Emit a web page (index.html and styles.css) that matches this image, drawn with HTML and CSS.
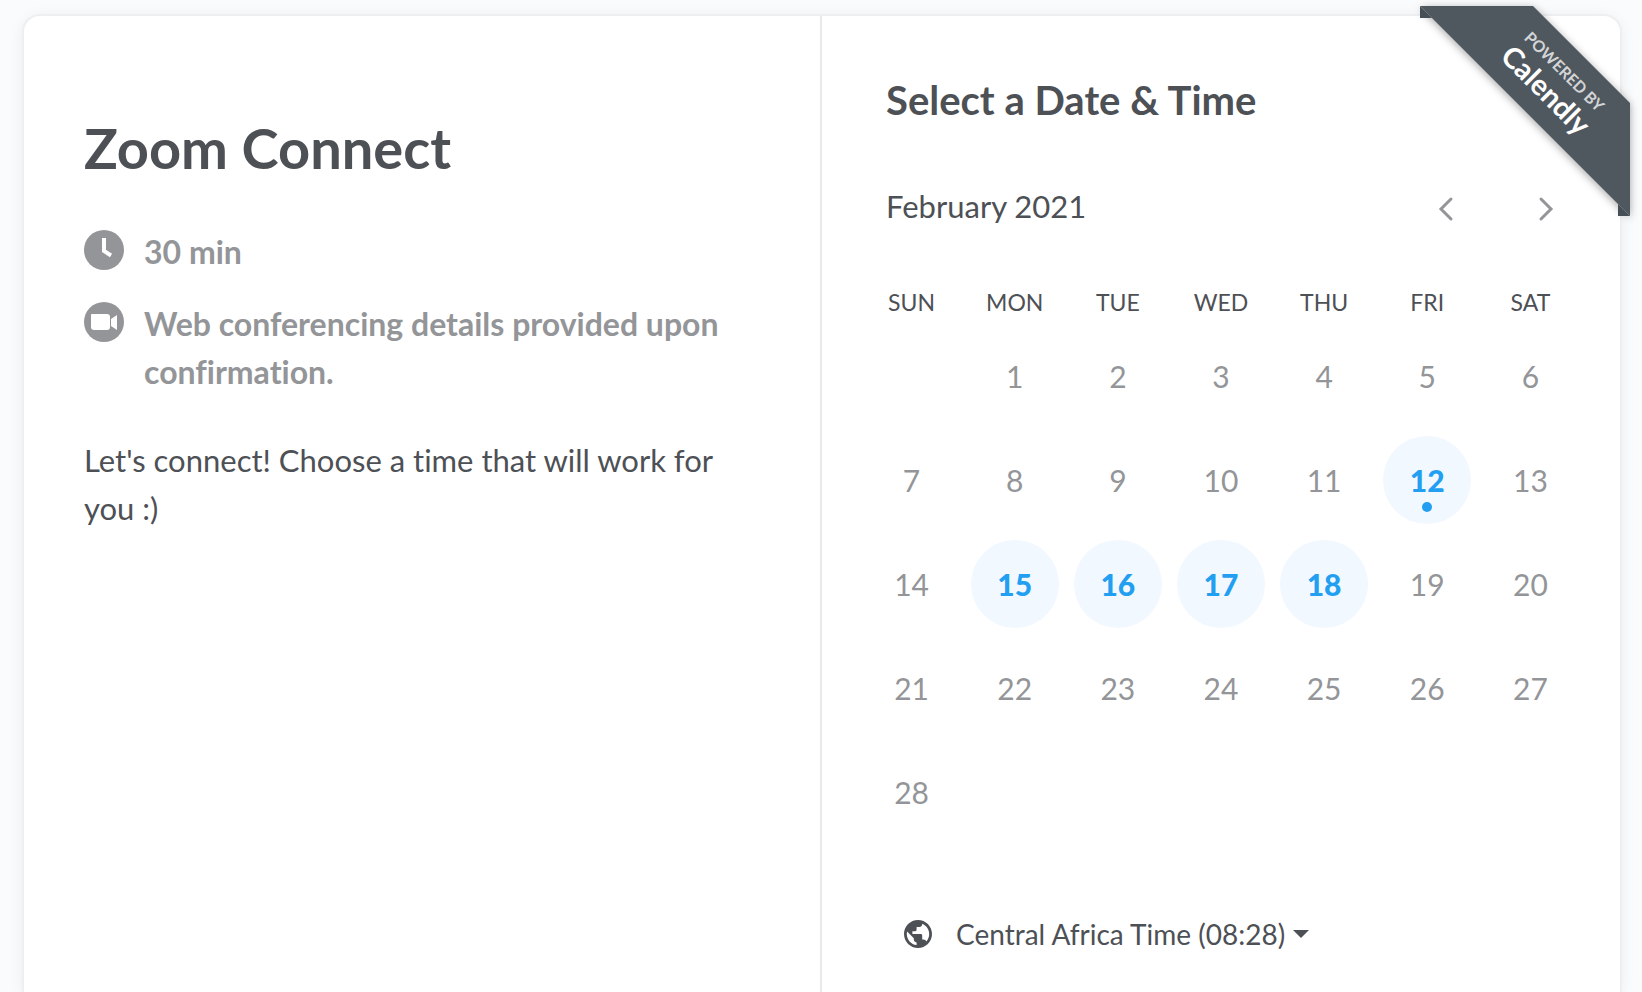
FILE: index.html
```html
<!DOCTYPE html>
<html lang="en">
<head>
<meta charset="utf-8">
<meta name="viewport" content="width=device-width, initial-scale=1">
<title>Zoom Connect - Calendly</title>
<link rel="stylesheet" href="styles.css">
</head>
<body>
<main class="card">
  <section class="details">
    <h1 class="event-title">Zoom Connect</h1>
    <ul class="facts">
      <li class="fact">
        <svg class="fact-icon" viewBox="0 0 40 40" aria-hidden="true">
          <circle cx="20" cy="20" r="20" fill="#939598"/>
          <path d="M20 8v13l7 4.500" fill="none" stroke="#fff" stroke-width="4"/>
        </svg>
        <span class="fact-text">30 min</span>
      </li>
      <li class="fact">
        <svg class="fact-icon" viewBox="0 0 40 40" aria-hidden="true">
          <circle cx="20" cy="20" r="20" fill="#939598"/>
          <path d="M8 12h15q3 0 3 3v10q0 3-3 3H10q-3 0-3-3V13q0-1 1-1z" fill="#fff"/>
          <path d="M27 17l6-4v15l-6-4z" fill="#fff"/>
        </svg>
        <span class="fact-text">Web conferencing details provided upon confirmation.</span>
      </li>
    </ul>
    <p class="description">Let's connect! Choose a time that will work for you :)</p>
  </section>

  <section class="booking">
    <h2 class="booking-title">Select a Date &amp; Time</h2>
    <div class="month-bar">
      <span class="month">February 2021</span>
      <div class="month-nav">
        <button class="nav-button" type="button" aria-label="Previous month">
          <svg class="chevron" viewBox="0 0 16 26" aria-hidden="true"><path d="M13 3L3 13l10 10" /></svg>
        </button>
        <button class="nav-button" type="button" aria-label="Next month">
          <svg class="chevron" viewBox="0 0 16 26" aria-hidden="true"><path d="M3 3l10 10L3 23" /></svg>
        </button>
      </div>
    </div>
    <table class="calendar">
      <thead>
        <tr><th>SUN</th><th>MON</th><th>TUE</th><th>WED</th><th>THU</th><th>FRI</th><th>SAT</th></tr>
      </thead>
      <tbody>
        <tr><td></td><td>1</td><td>2</td><td>3</td><td>4</td><td>5</td><td>6</td></tr>
        <tr><td>7</td><td>8</td><td>9</td><td>10</td><td>11</td><td><button class="day today" type="button">12</button></td><td>13</td></tr>
        <tr><td>14</td><td><button class="day" type="button">15</button></td><td><button class="day" type="button">16</button></td><td><button class="day" type="button">17</button></td><td><button class="day" type="button">18</button></td><td>19</td><td>20</td></tr>
        <tr><td>21</td><td>22</td><td>23</td><td>24</td><td>25</td><td>26</td><td>27</td></tr>
        <tr><td>28</td><td></td><td></td><td></td><td></td><td></td><td></td></tr>
      </tbody>
    </table>
    <div class="timezone">
      <svg class="globe" viewBox="2 2 20 20" aria-hidden="true"><path fill="#4d5055" d="M12 2C6.480 2 2 6.480 2 12s4.480 10 10 10 10-4.480 10-10S17.520 2 12 2zm-1 17.930c-3.950-.490-7-3.850-7-7.930 0-.620.080-1.210.210-1.790L9 15v1c0 1.100.900 2 2 2v1.930zm6.900-2.540c-.260-.810-1-1.390-1.900-1.390h-1v-3c0-.550-.450-1-1-1H8v-2h2c.550 0 1-.450 1-1V7h2c1.100 0 2-.900 2-2v-.410c2.930 1.190 5 4.060 5 7.410 0 2.080-.800 3.970-2.100 5.390z"/></svg>
      <select class="timezone-select" aria-label="Time zone">
        <option>Central Africa Time (08:28)</option>
      </select>
      <svg class="caret" viewBox="0 0 16 8" aria-hidden="true"><path d="M0 0h16L8 8z" fill="#4d5055"/></svg>
    </div>
  </section>

  <a class="ribbon" href="#" aria-label="Powered by Calendly">
    <svg class="ribbon-art" viewBox="0 0 210 210">
      <path class="ribbon-band" d="M0 0h113l97 97v113z"/>
      <path class="ribbon-fold" d="M0 0v12h12zM198 198v12h12z"/>
      <g transform="translate(134 76) rotate(45)">
        <text class="ribbon-small" x="0" y="-9">POWERED BY</text>
        <text class="ribbon-brand" x="0" y="22">Calendly</text>
      </g>
    </svg>
  </a>
</main>
</body>
</html>
```
FILE: styles.css
```css
* {
  box-sizing: border-box;
}

body {
  margin: 0;
  padding: 16px 22px 0 24px;
  background: #fafbfd;
  color: #4d5055;
  font-family: Lato, "Open Sans", sans-serif;
  font-size: 31px;
  font-variant-ligatures: none;
  line-height: 48px;
}

.card {
  position: relative;
  display: grid;
  grid-template-columns: 1fr 1fr;
  min-height: calc(100vh - 16px);
  background: #fff;
  border-radius: 16px 16px 0 0;
  box-shadow: 0 0 0 2px #eeeff1, 0 2px 16px rgba(0, 0, 0, 0.08);
}

.details {
  padding: 98px 60px 0;
  border-right: 2px solid #e8e9eb;
}

.event-title {
  margin: 0;
  font-size: 56px;
  line-height: 68px;
}

.facts {
  display: flex;
  flex-direction: column;
  gap: 24px;
  margin: 46px 0 0;
  padding: 0;
  list-style: none;
  color: #939598;
  font-size: 32px;
  font-weight: 700;
}

.fact {
  display: flex;
  gap: 20px;
}

.fact-icon {
  flex: none;
  width: 40px;
  height: 40px;
  margin-top: 2px;
}

.description {
  margin: 40px 0 0;
}

.booking {
  padding: 58px 38px 0;
}

.booking-title {
  margin: 0 26px;
  font-size: 40px;
  line-height: 52px;
}

.month-bar {
  display: flex;
  justify-content: space-between;
  align-items: center;
  margin: 56px 0 0 26px;
}

.month-nav {
  display: flex;
  gap: 28px;
}

.nav-button {
  display: flex;
  align-items: center;
  justify-content: center;
  width: 72px;
  height: 48px;
  padding: 6px 0 0;
  border: 0;
  background: none;
}

.chevron {
  width: 16px;
  height: 26px;
  fill: none;
  stroke: #939598;
  stroke-width: 3;
  stroke-linecap: round;
}

.calendar {
  width: 100%;
  margin-top: 50px;
  border-collapse: collapse;
  table-layout: fixed;
}

.calendar th {
  height: 44px;
  padding: 0;
  font-size: 23px;
  font-weight: 400;
  line-height: 44px;
}

.calendar td {
  height: 104px;
  padding: 0;
  color: #939598;
  font-size: 30px;
  text-align: center;
}

.day {
  position: relative;
  display: block;
  width: 88px;
  height: 88px;
  margin: 0 auto;
  padding: 0;
  border: 0;
  border-radius: 50%;
  background: #f2f8ff;
  color: #239ff1;
  font: inherit;
  font-weight: 900;
}

.today::after {
  content: "";
  position: absolute;
  bottom: 12px;
  left: 50%;
  width: 10px;
  height: 10px;
  margin-left: -5px;
  border-radius: 50%;
  background: #239ff1;
}

.timezone {
  display: flex;
  align-items: center;
  margin: 66px 44px 0;
}

.globe {
  width: 28px;
  height: 28px;
  margin-right: 24px;
}

.timezone-select {
  appearance: none;
  padding: 0;
  border: 0;
  background: none;
  color: inherit;
  font: inherit;
  font-size: 28px;
  line-height: 48px;
}

.caret {
  width: 16px;
  height: 8px;
  margin-left: 6px;
}

.ribbon {
  position: absolute;
  top: -10px;
  right: -10px;
  width: 210px;
  height: 210px;
}

.ribbon-art {
  display: block;
  width: 100%;
  height: 100%;
  overflow: visible;
}

.ribbon-fold {
  fill: #464e56;
}

.ribbon-band {
  fill: #50585f;
  filter: drop-shadow(0 2px 4px rgba(0, 0, 0, 0.35));
}

.ribbon-small,
.ribbon-brand {
  font-weight: 700;
  text-anchor: middle;
}

.ribbon-small {
  fill: #d3d5d7;
  font-size: 16px;
}

.ribbon-brand {
  fill: #fff;
  font-size: 29px;
}
```
